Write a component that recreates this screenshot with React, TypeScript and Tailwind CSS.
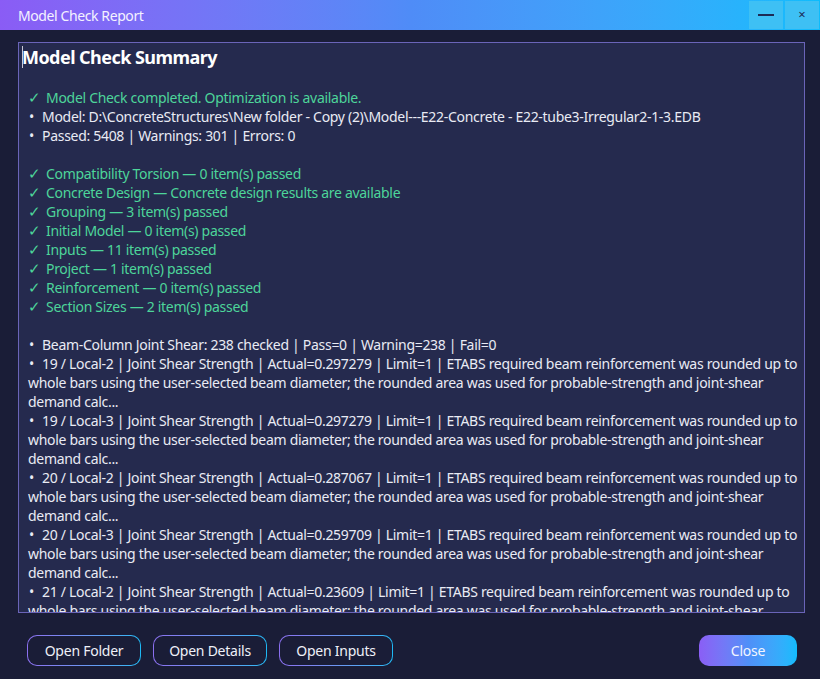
import React from "react";

const FONT = { fontFamily: '"Segoe UI", "Noto Sans", "Open Sans", sans-serif' };

const passed = [
  "Compatibility Torsion — 0 item(s) passed",
  "Concrete Design — Concrete design results are available",
  "Grouping — 3 item(s) passed",
  "Initial Model — 0 item(s) passed",
  "Inputs — 11 item(s) passed",
  "Project — 1 item(s) passed",
  "Reinforcement — 0 item(s) passed",
  "Section Sizes — 2 item(s) passed",
];

const note =
  "ETABS required beam reinforcement was rounded up to whole bars using the user-selected beam diameter; the rounded area was used for probable-strength and joint-shear demand calc...";

const joints = [
  ["19 / Local-2", "0.297279"],
  ["19 / Local-3", "0.297279"],
  ["20 / Local-2", "0.287067"],
  ["20 / Local-3", "0.259709"],
  ["21 / Local-2", "0.23609"],
  ["21 / Local-3", "0.23609"],
];

function Check({ children }: { children: React.ReactNode }) {
  return (
    <div className="text-[#4dd59a]">
      <span className="inline-block w-[18px] text-[15px]">✓</span>
      {children}
    </div>
  );
}

function Bullet({ children }: { children: React.ReactNode }) {
  return (
    <div>
      <span className="inline-block w-[14px] pl-[1px]">•</span>
      {children}
    </div>
  );
}

export default function App() {
  return (
    <div className="w-[820px] h-[679px] flex flex-col bg-[#1a1d37] overflow-hidden" style={FONT}>
      {/* title bar */}
      <div className="h-[30px] flex items-center bg-gradient-to-r from-[#8a5cf5] via-[#4f8cf7] to-[#0bbcfd] shrink-0">
        <div className="pl-[18px] text-[14px] tracking-[-0.4px] text-[#f4f2ff] flex-1">Model Check Report</div>
        <div className="flex gap-[2px] h-[28px] self-start mt-[1px] pr-[1px]">
          <button className="w-[34px] h-full bg-[#3ec0f4] flex items-center justify-center">
            <span className="block w-[16px] h-[2px] bg-[#1d2b55]" />
          </button>
          <button className="w-[34px] h-full bg-[#3ec0f4] flex items-center justify-center text-[#1d2b55] text-[13px]">
            ×
          </button>
        </div>
      </div>

      <div className="flex-1 flex flex-col pl-[18px] pr-[15px] pt-[12px]">
        {/* report text */}
        <div className="h-[571px] border border-[#6a64b8] bg-[#252a4e] overflow-hidden">
          <div className="pl-[9px] text-[14px] leading-[19px] tracking-[-0.3px] text-[#e9ebf4]">
            <div className="relative -ml-[6px] pt-[2px] text-[18px] leading-[24px] font-bold tracking-[-0.55px] text-white">
              <span className="absolute left-0 top-[3px] w-px h-[22px] bg-[#c9c9d8]" />
              Model Check Summary
            </div>
            <div className="h-[19px]" />
            <Check>Model Check completed. Optimization is available.</Check>
            <Bullet>
              Model: D:\ConcreteStructures\New folder - Copy (2)\Model---E22-Concrete - E22-tube3-Irregular2-1-3.EDB
            </Bullet>
            <Bullet>Passed: 5408 | Warnings: 301 | Errors: 0</Bullet>
            <div className="h-[19px]" />
            {passed.map((p) => (
              <Check key={p}>{p}</Check>
            ))}
            <div className="h-[19px]" />
            <Bullet>Beam-Column Joint Shear: 238 checked | Pass=0 | Warning=238 | Fail=0</Bullet>
            {joints.map(([id, v]) => (
              <Bullet key={id + v}>
                {id} | Joint Shear Strength | Actual={v} | Limit=1 | {note}
              </Bullet>
            ))}
          </div>
        </div>

        {/* actions */}
        <div className="flex items-center pt-[22px] pl-[9px] pr-[8px] gap-[12px]">
          {["Open Folder", "Open Details", "Open Inputs"].map((t) => (
            <div
              key={t}
              className="w-[114px] h-[31px] rounded-[10px] p-px bg-gradient-to-r from-[#8b6ff0] to-[#1cb9f5]"
            >
              <button className="w-full h-full rounded-[9px] bg-[#1a1d37] text-[14px] tracking-[-0.25px] text-[#eef0f8]">
                {t}
              </button>
            </div>
          ))}
          <div className="flex-1" />
          <button className="w-[98px] h-[31px] rounded-[10px] bg-gradient-to-r from-[#8a5ef5] via-[#4f8ff8] to-[#10bcfd] text-[14px] tracking-[-0.25px] text-[#f2f6ff]">
            Close
          </button>
        </div>
      </div>
    </div>
  );
}
